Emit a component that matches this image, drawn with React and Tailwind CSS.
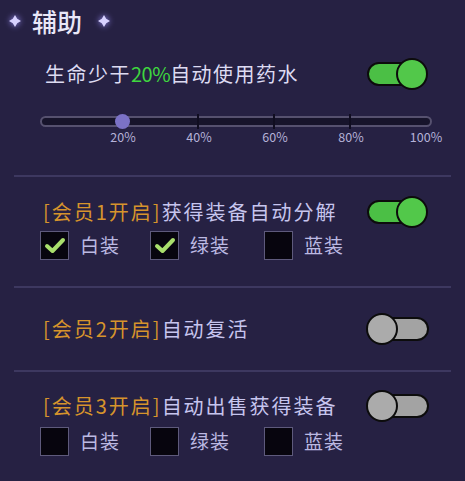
import React from 'react';

const font = { fontFamily: '"Noto Sans CJK SC", "Noto Sans", sans-serif' };

const Sparkle = () => (
  <svg width="12" height="12" viewBox="0 0 12 12" className="drop-shadow-[0_0_3px_#9c90ff]">
    <path d="M6 0 L8.2 3.8 L12 6 L8.2 8.2 L6 12 L3.8 8.2 L0 6 L3.8 3.8 Z" fill="#d8d2ff" />
  </svg>
);

const Toggle = ({ on }) => (
  <div className="relative w-[64px] h-[32px] shrink-0">
    <div
      className={
        on
          ? 'absolute left-[1px] right-[6px] top-[4px] bottom-[4px] rounded-full border-2 border-[#0c0c0c] bg-[#4bbf45]'
          : 'absolute left-[8px] right-[1px] top-[4px] bottom-[4px] rounded-full border-2 border-[#0c0c0c] bg-[#a3a3a3]'
      }
    />
    <div
      className={
        on
          ? 'absolute top-0 left-[30px] w-[32px] h-[32px] rounded-full border-2 border-[#0c0c0c] bg-[#52c84a]'
          : 'absolute top-0 left-0 w-[32px] h-[32px] rounded-full border-2 border-[#0c0c0c] bg-[#ababab]'
      }
    />
  </div>
);

const Check = ({ checked, label, width }) => (
  <div className={`flex items-center gap-[11px] ${width}`}>
    <div className="w-[29px] h-[29px] bg-[#07050e] border-[1.5px] border-[#5e5a7c] flex items-center justify-center">
      {checked && (
        <svg width="22" height="18" viewBox="0 0 22 18">
          <path d="M3 9 L8.5 14 L19 3" fill="none" stroke="#a9df6c" strokeWidth="4" strokeLinecap="round" strokeLinejoin="round" />
        </svg>
      )}
    </div>
    <span className="text-[19px] tracking-[1px] text-[#bcb9e2]">{label}</span>
  </div>
);

const Divider = () => <div className="mx-[14px] h-[2px] bg-[#3d3860]" />;

const Title = ({ tag, text, on }) => (
  <div className="flex items-center justify-between h-[34px] pl-[43px] pr-[35px]">
    <span className="text-[20px] tracking-[2px] leading-none">
      <span className="text-[#d6942c]">{tag}</span>
      <span className="text-[#c7c5ee]">{text}</span>
    </span>
    <Toggle on={on} />
  </div>
);

const Checks = ({ values }) => (
  <div className="flex items-center pl-[40px] h-[29px]">
    <Check checked={values[0]} label="白装" width="w-[110px]" />
    <Check checked={values[1]} label="绿装" width="w-[114px]" />
    <Check checked={values[2]} label="蓝装" width="w-[110px]" />
  </div>
);

const ticks = [198, 274, 350];
const labels = [
  { x: 123, t: '20%' },
  { x: 199, t: '40%' },
  { x: 275, t: '60%' },
  { x: 351, t: '80%' },
  { x: 426, t: '100%' },
];

export default function App() {
  return (
    <div className="w-[465px] h-[481px] bg-[#262143] overflow-hidden" style={font}>
      {/* header */}
      <div className="flex items-center h-[42px] pl-[9px]">
        <Sparkle />
        <span className="ml-[11px] mr-[16px] text-[25px] font-medium text-[#e9e7f8] leading-none">辅助</span>
        <Sparkle />
      </div>

      {/* potion row */}
      <div className="flex items-center justify-between h-[64px] pl-[45px] pr-[35px]">
        <span className="text-[20px] tracking-[1.5px] text-[#dddbf2] leading-none">
          生命少于<span className="text-[#3fd63f] tracking-[-0.5px]">20%</span>自动使用药水
        </span>
        <Toggle on />
      </div>

      {/* slider */}
      <div className="relative h-[69px]">
        <div className="absolute left-[40px] w-[392px] top-[10px] h-[11px] rounded-full border-2 border-[#56516f] bg-[#17142b]" />
        {ticks.map((x) => (
          <div key={x} className="absolute top-[8px] w-[2px] h-[15px] bg-[#100d20]" style={{ left: x - 1 }} />
        ))}
        <div className="absolute top-[8px] w-[15px] h-[15px] rounded-full bg-[#7b72c6]" style={{ left: 115 }} />
        {labels.map((l) => (
          <span
            key={l.t}
            className="absolute top-[25px] -translate-x-1/2 text-[12.5px] text-[#b5b2d8] leading-none"
            style={{ left: l.x }}
          >
            {l.t}
          </span>
        ))}
      </div>

      <Divider />

      <div className="pt-[18px] pb-[26px]">
        <Title tag="[会员1开启]" text="获得装备自动分解" on />
        <div className="mt-[2px]">
          <Checks values={[true, true, false]} />
        </div>
      </div>

      <Divider />

      <div className="pt-[24px] pb-[24px]">
        <Title tag="[会员2开启]" text="自动复活" on={false} />
      </div>

      <Divider />

      <div className="pt-[17px]">
        <Title tag="[会员3开启]" text="自动出售获得装备" on={false} />
        <div className="mt-[4px]">
          <Checks values={[false, false, false]} />
        </div>
      </div>
    </div>
  );
}
